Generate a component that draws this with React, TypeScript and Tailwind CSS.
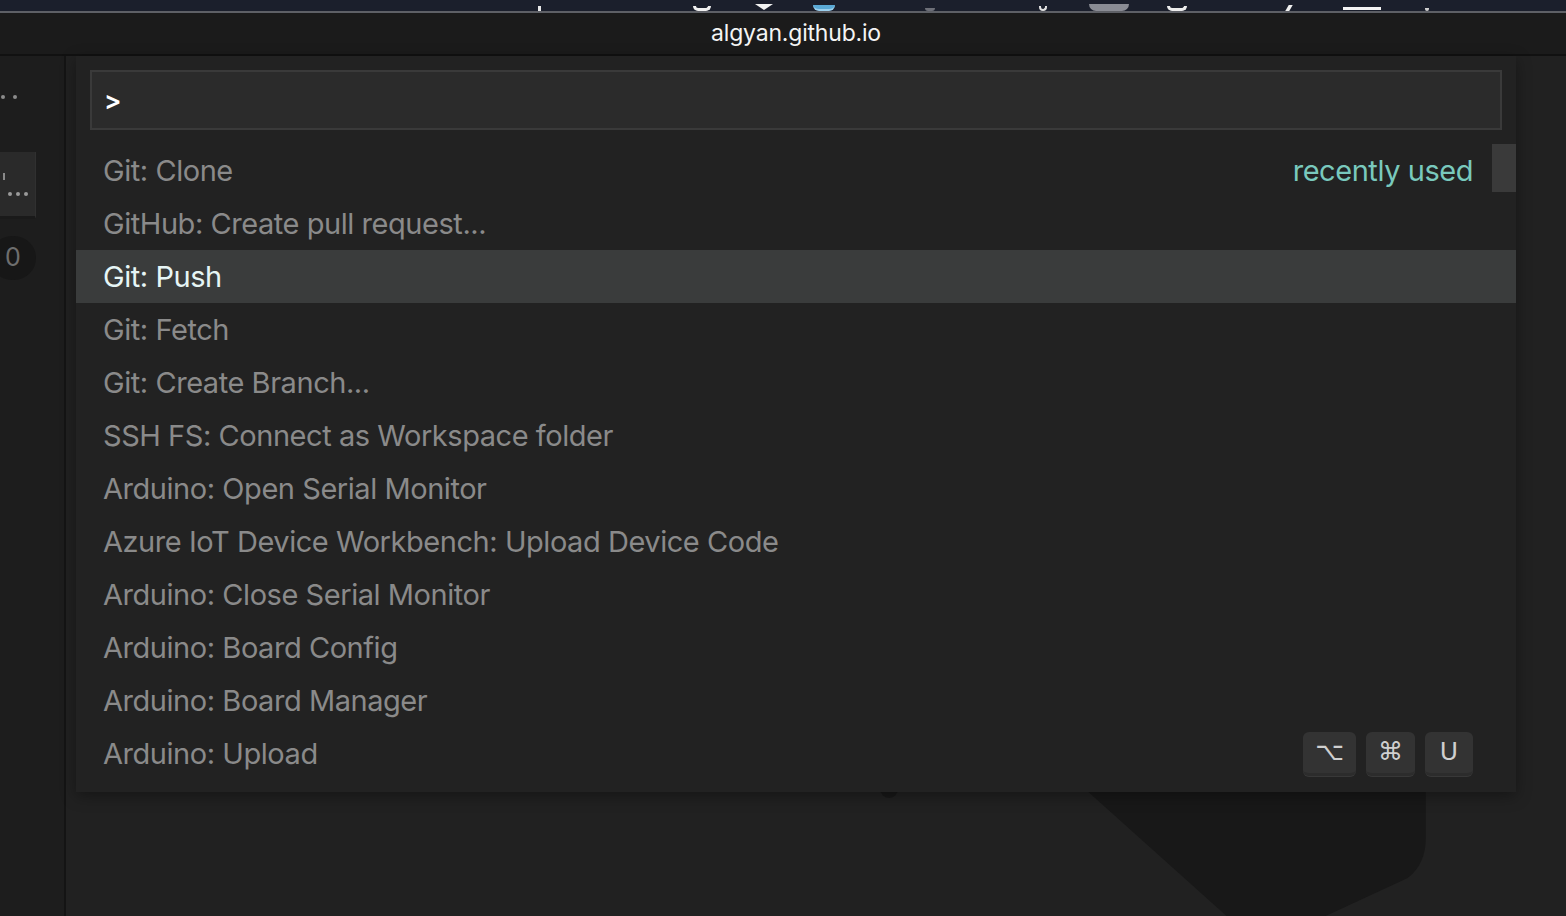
import React from 'react'

type Command = {
    label: string
    selected?: boolean
    recent?: boolean
    keys?: string[]
}

const commands: Command[] = [
    { label: 'Git: Clone', recent: true },
    { label: 'GitHub: Create pull request...' },
    { label: 'Git: Push', selected: true },
    { label: 'Git: Fetch' },
    { label: 'Git: Create Branch...' },
    { label: 'SSH FS: Connect as Workspace folder' },
    { label: 'Arduino: Open Serial Monitor' },
    { label: 'Azure IoT Device Workbench: Upload Device Code' },
    { label: 'Arduino: Close Serial Monitor' },
    { label: 'Arduino: Board Config' },
    { label: 'Arduino: Board Manager' },
    { label: 'Arduino: Upload', keys: ['⌥', '⌘', 'U'] },
]

const font = { fontFamily: 'Inter, "Noto Sans", sans-serif' }

const MenuBar = () => (
    <div className="h-[11px] bg-[#1b1f2c] flex items-end overflow-hidden">
        <div className="ml-[538px] w-[3px] h-[5px] bg-[#e8e8e8]" />
        <div className="ml-[152px] w-[18px] h-[5px] rounded-b-full border-b-[3px] border-x-[3px] border-[#f0f0f0]" />
        <div className="ml-[44px] w-0 h-0 border-x-[9px] border-x-transparent border-t-[6px] border-t-[#f2f2f2] mb-[1px]" />
        <div className="ml-[40px] w-[22px] h-[6px] rounded-b-full bg-[#5aa9d6] border-b-2 border-[#9cd0ee]" />
        <div className="ml-[90px] w-[10px] h-[3px] rounded-b-full bg-[#6d6f78]" />
        <div className="ml-[104px] w-[8px] h-[5px] rounded-b-full border-b-2 border-x-2 border-[#e0e0e0]" />
        <div className="ml-[42px] w-[40px] h-[7px] rounded-b-[8px] bg-[#8a8c94]" />
        <div className="ml-[38px] w-[20px] h-[5px] rounded-b-full border-b-[3px] border-x-[3px] border-[#ececec]" />
        <div className="ml-[100px] w-[4px] h-[6px] bg-[#f0f0f0] skew-x-[-30deg]" />
        <div className="ml-[52px] w-[38px] h-[3px] bg-[#f4f4f4] mb-[1px]" />
        <div className="ml-[44px] w-[4px] h-[3px] bg-[#cfcfcf] rounded-b-full" />
    </div>
)

const TitleBar = () => (
    <div className="h-[45px] bg-[#1b1b1b] border-t-2 border-t-[#5e6066] border-b-2 border-b-[#111111] flex items-center justify-center pl-[26px]">
        <span className="text-[23px] text-[#f4f4f4] tracking-[-0.2px] pb-[1px]" style={font}>
            algyan.github.io
        </span>
    </div>
)

const Sidebar = () => (
    <div className="w-[66px] shrink-0 bg-[#1d1d1d] border-r-2 border-[#141414] flex flex-col">
        <div className="flex gap-[8px] pl-[1px] mt-[39px]">
            <span className="w-[4px] h-[4px] rounded-full bg-[#8b8b8b]" />
            <span className="w-[4px] h-[4px] rounded-full bg-[#8b8b8b]" />
        </div>
        <div className="mt-[53px] w-[36px] h-[67px] bg-[#2a2a2a] border-r border-[#303030] border-b-[3px] border-b-[#1a1a1a] flex flex-col pl-[3px]">
            <span className="mt-[21px] w-[2px] h-[7px] bg-[#8a8a8a]" />
            <div className="flex gap-[4px] ml-[5px] mt-[12px]">
                <span className="w-[4px] h-[4px] rounded-full bg-[#9a9a9a]" />
                <span className="w-[4px] h-[4px] rounded-full bg-[#9a9a9a]" />
                <span className="w-[4px] h-[4px] rounded-full bg-[#9a9a9a]" />
            </div>
        </div>
        <div className="mt-[17px] -ml-[10px] w-[46px] h-[44px] rounded-full bg-[#171717] flex items-center justify-center">
            <span className="text-[25px] text-[#6e6e6e]" style={font}>0</span>
        </div>
    </div>
)

const Watermark = () => (
    <svg className="absolute inset-0 w-full h-full" viewBox="0 0 1498 860" preserveAspectRatio="none">
        <path
            d="M1021 736 L1358 736 L1358 782 Q1358 808 1340 822 L1258 860 L1159 860 Z"
            fill="#181818"
        />
        <circle cx="822" cy="733" r="9" fill="#181818" />
    </svg>
)

const Key = ({ k }: { k: string }) => (
    <span
        className="h-[44px] min-w-[48px] px-[12px] rounded-[6px] bg-[#333333] border-b-[3px] border-[#2c2c2c] shadow-[0_1px_0_#383838] flex items-center justify-center text-[25px] text-[#cfcfcf]"
        style={{ fontFamily: '"DejaVu Sans", Inter, sans-serif' }}
    >
        {k}
    </span>
)

const QuickPick = () => (
    <div className="absolute left-[10px] top-0 w-[1440px] bg-[#222222] shadow-[0_4px_14px_rgba(0,0,0,0.35)] px-[14px] pt-[14px] pb-[12px]" style={font}>
        <div className="h-[60px] bg-[#2b2b2b] border-2 border-[#3a3a3a] flex items-center pl-[12px]">
            <span className="text-[26px] text-white font-semibold">&gt;</span>
        </div>
        <div className="relative mt-[14px] -mx-[14px]">
            {commands.map((c) => (
                <div
                    key={c.label}
                    className={
                        c.selected
                            ? 'h-[53px] flex items-center pl-[27px] pr-[43px] bg-[#3a3c3c]'
                            : 'h-[53px] flex items-center pl-[27px] pr-[43px]'
                    }
                >
                    <span
                        className={
                            c.selected
                                ? 'text-[29px] tracking-[-0.45px] text-[#e6f5f5]'
                                : 'text-[29px] tracking-[-0.45px] text-[#8a8a8a]'
                        }
                    >
                        {c.label}
                    </span>
                    <span className="flex-1" />
                    {c.recent && (
                        <span className="text-[29px] tracking-[-0.45px] text-[#79c9bd]">recently used</span>
                    )}
                    {c.keys && (
                        <div className="flex gap-[10px]">
                            {c.keys.map((k) => (
                                <Key key={k} k={k} />
                            ))}
                        </div>
                    )}
                </div>
            ))}
            <div className="absolute right-0 top-0 w-[24px] h-[48px] bg-[#3a3a3a]" />
        </div>
    </div>
)

export default function App() {
    return (
        <div className="w-[1566px] h-[916px] overflow-hidden bg-[#1f1f1f] flex flex-col">
            <MenuBar />
            <TitleBar />
            <div className="flex flex-1">
                <Sidebar />
                <div className="relative flex-1 bg-[#212121]">
                    <Watermark />
                    <QuickPick />
                </div>
            </div>
        </div>
    )
}
